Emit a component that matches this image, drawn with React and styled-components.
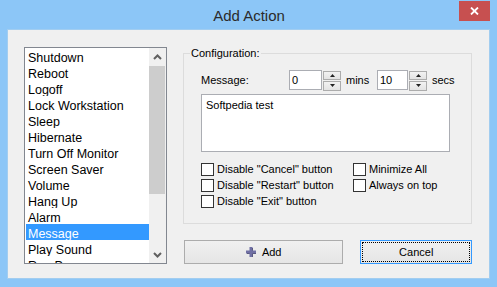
import React from "react";
import styled, { createGlobalStyle } from "styled-components";

const GlobalStyle = createGlobalStyle`
  html, body {
    margin: 0;
    padding: 0;
    background: #8cc6f7;
  }
  body {
    font-family: "Liberation Sans", Arial, sans-serif;
  }
`;

const actions = [
    "Shutdown",
    "Reboot",
    "Logoff",
    "Lock Workstation",
    "Sleep",
    "Hibernate",
    "Turn Off Monitor",
    "Screen Saver",
    "Volume",
    "Hang Up",
    "Alarm",
    "Message",
    "Play Sound",
    "Run Program",
];

function App() {
    return (
        <>
            <GlobalStyle />
            <Window>
                <TitleBar>
                    <span />
                    <Title>Add Action</Title>
                    <CloseButton>
                        <svg width="9" height="8" viewBox="0 0 9 8">
                            <path d="M1 0.5 L8 7.5 M8 0.5 L1 7.5" stroke="#fff" strokeWidth="1.8" />
                        </svg>
                    </CloseButton>
                </TitleBar>
                <Client>
                    <ListBox>
                        <Items>
                            {actions.map((a) => (
                                <Item key={a} selected={a === "Message"}>
                                    {a}
                                </Item>
                            ))}
                        </Items>
                        <ScrollBar>
                            <ArrowButton>
                                <svg width="9" height="6" viewBox="0 0 9 6">
                                    <path d="M1 5 L4.5 1.5 L8 5" fill="none" stroke="#606060" strokeWidth="2" />
                                </svg>
                            </ArrowButton>
                            <Track>
                                <Thumb />
                            </Track>
                            <ArrowButton>
                                <svg width="9" height="6" viewBox="0 0 9 6">
                                    <path d="M1 1 L4.5 4.5 L8 1" fill="none" stroke="#606060" strokeWidth="2" />
                                </svg>
                            </ArrowButton>
                        </ScrollBar>
                    </ListBox>
                    <RightColumn>
                        <GroupBox>
                            <Legend>Configuration:</Legend>
                            <GroupBody>
                                <SpinRow>
                                    <FieldLabel>Message:</FieldLabel>
                                    <NumBox width={33}>0</NumBox>
                                    <Spinner />
                                    <Unit width={36}>mins</Unit>
                                    <NumBox width={31}>10</NumBox>
                                    <Spinner />
                                    <Unit>secs</Unit>
                                </SpinRow>
                                <MemoBox>Softpedia test</MemoBox>
                                <CheckGrid>
                                    <Check label={'Disable "Cancel" button'} />
                                    <Check label="Minimize All" />
                                    <Check label={'Disable "Restart" button'} />
                                    <Check label="Always on top" />
                                    <Check label={'Disable "Exit" button'} />
                                </CheckGrid>
                            </GroupBody>
                        </GroupBox>
                        <ButtonRow>
                            <PushButton width={160}>
                                <svg width="11" height="11" viewBox="0 0 11 11">
                                    <path d="M4 1 H7 V4 H10 V7 H7 V10 H4 V7 H1 V4 H4 Z" fill="#44445e" />
                                    <path d="M3.5 0 H6.5 V3.5 H10 V6.5 H6.5 V10 H3.5 V6.5 H0 V3.5 H3.5 Z" fill="#6f6fa3" />
                                </svg>
                                Add
                            </PushButton>
                            <PushButton width={112} focused>
                                Cancel
                            </PushButton>
                        </ButtonRow>
                    </RightColumn>
                </Client>
            </Window>
        </>
    );
}

function Spinner() {
    return (
        <SpinBox>
            <SpinHalf>
                <svg width="5" height="3" viewBox="0 0 5 3">
                    <path d="M0 3 L2.5 0 L5 3 Z" fill="#222" />
                </svg>
            </SpinHalf>
            <SpinHalf>
                <svg width="5" height="3" viewBox="0 0 5 3">
                    <path d="M0 0 L2.5 3 L5 0 Z" fill="#222" />
                </svg>
            </SpinHalf>
        </SpinBox>
    );
}

function Check({ label }) {
    return (
        <CheckRow>
            <CheckBox />
            <span>{label}</span>
        </CheckRow>
    );
}

const Window = styled.div`
    width: 497px;
    height: 287px;
    box-sizing: border-box;
    padding: 0 8px 9px 8px;
    background: #8cc6f7;
    display: flex;
    flex-direction: column;
`;

const TitleBar = styled.div`
    height: 30px;
    display: grid;
    grid-template-columns: 1fr auto 1fr;
    align-items: start;
    margin: 0 -8px;
    padding: 0 7px 0 8px;
`;

const Title = styled.div`
    font-size: 15px;
    line-height: 31px;
    color: #2b2b2b;
`;

const CloseButton = styled.div`
    justify-self: end;
    width: 31px;
    height: 20px;
    margin-top: 1px;
    background: #c75050;
    display: flex;
    align-items: center;
    justify-content: center;
`;

const Client = styled.div`
    flex: 1;
    background: #f0f0f0;
    box-shadow: 0 0 0 1px #a2cdf0;
    display: flex;
    gap: 16px;
    padding: 17px 17px 0 16px;
    box-sizing: border-box;
`;

const ListBox = styled.div`
    width: 145px;
    height: 217px;
    box-sizing: border-box;
    border: 1px solid #828790;
    background: #fff;
    display: flex;
`;

const Items = styled.div`
    flex: 1;
    padding-left: 1px;
    overflow: hidden;
`;

const Item = styled.div`
    height: 16px;
    line-height: 20px;
    padding-left: 2px;
    font-size: 12.5px;
    white-space: nowrap;
    overflow: hidden;
    color: ${(p) => (p.selected ? "#fff" : "#000")};
    background: ${(p) => (p.selected ? "#3399ff" : "transparent")};
`;

const ScrollBar = styled.div`
    width: 17px;
    background: #f0f0f0;
    display: flex;
    flex-direction: column;
`;

const ArrowButton = styled.div`
    height: 17px;
    display: flex;
    align-items: center;
    justify-content: center;
`;

const Track = styled.div`
    flex: 1;
    display: flex;
    flex-direction: column;
`;

const Thumb = styled.div`
    height: 128px;
    margin: 1px 1px 0 0;
    background: #cdcdcd;
`;

const RightColumn = styled.div`
    width: 289px;
    display: flex;
    flex-direction: column;
`;

const GroupBox = styled.fieldset`
    margin: 0;
    padding: 0;
    height: 177px;
    box-sizing: border-box;
    border: 1px solid #dcdcdc;
    min-width: 0;
`;

const Legend = styled.legend`
    font-size: 11px;
    line-height: 13px;
    padding: 0 1px;
    margin-left: 6px;
    color: #000;
`;

const GroupBody = styled.div`
    padding: 10px 0 0 17px;
    font-size: 11px;
    color: #000;
`;

const SpinRow = styled.div`
    display: flex;
    align-items: center;
    height: 20px;
`;

const FieldLabel = styled.span`
    width: 88px;
`;

const NumBox = styled.div`
    width: ${(p) => p.width}px;
    height: 20px;
    box-sizing: border-box;
    border: 1px solid #abadb3;
    background: #fff;
    padding-left: 2px;
    line-height: 18px;
`;

const SpinBox = styled.div`
    width: 18px;
    height: 20px;
    margin: 1px 0 0 1px;
    display: flex;
    flex-direction: column;
    gap: 1px;
`;

const SpinHalf = styled.div`
    flex: 1;
    box-sizing: border-box;
    border: 1px solid #acacac;
    background: linear-gradient(#f2f2f2, #e3e3e3);
    display: flex;
    align-items: center;
    justify-content: center;
`;

const Unit = styled.span`
    margin-left: 5px;
    width: ${(p) => (p.width ? `${p.width - 5}px` : "auto")};
`;

const MemoBox = styled.div`
    width: 249px;
    height: 58px;
    box-sizing: border-box;
    margin-top: 4px;
    border: 1px solid #abadb3;
    background: #fff;
    padding: 4px 4px;
    line-height: 13px;
`;

const CheckGrid = styled.div`
    margin-top: 9px;
    display: grid;
    grid-template-columns: 152px auto;
    grid-auto-rows: 16px;
`;

const CheckRow = styled.div`
    display: flex;
    align-items: center;
    gap: 3px;
    white-space: nowrap;
`;

const CheckBox = styled.div`
    width: 13px;
    height: 13px;
    box-sizing: border-box;
    border: 1px solid #333;
    background: #fff;
`;

const ButtonRow = styled.div`
    display: flex;
    gap: 17px;
    margin: 16px 0 0 1px;
`;

const PushButton = styled.div`
    width: ${(p) => p.width}px;
    height: 24px;
    box-sizing: border-box;
    border: 1px solid ${(p) => (p.focused ? "#3399ff" : "#acacac")};
    background: linear-gradient(#f0f0f0, #e5e5e5);
    display: flex;
    align-items: center;
    justify-content: center;
    gap: 5px;
    font-size: 11px;
    color: #000;
    outline: ${(p) => (p.focused ? "1px dotted #000" : "none")};
    outline-offset: -3px;
`;

export default App;
